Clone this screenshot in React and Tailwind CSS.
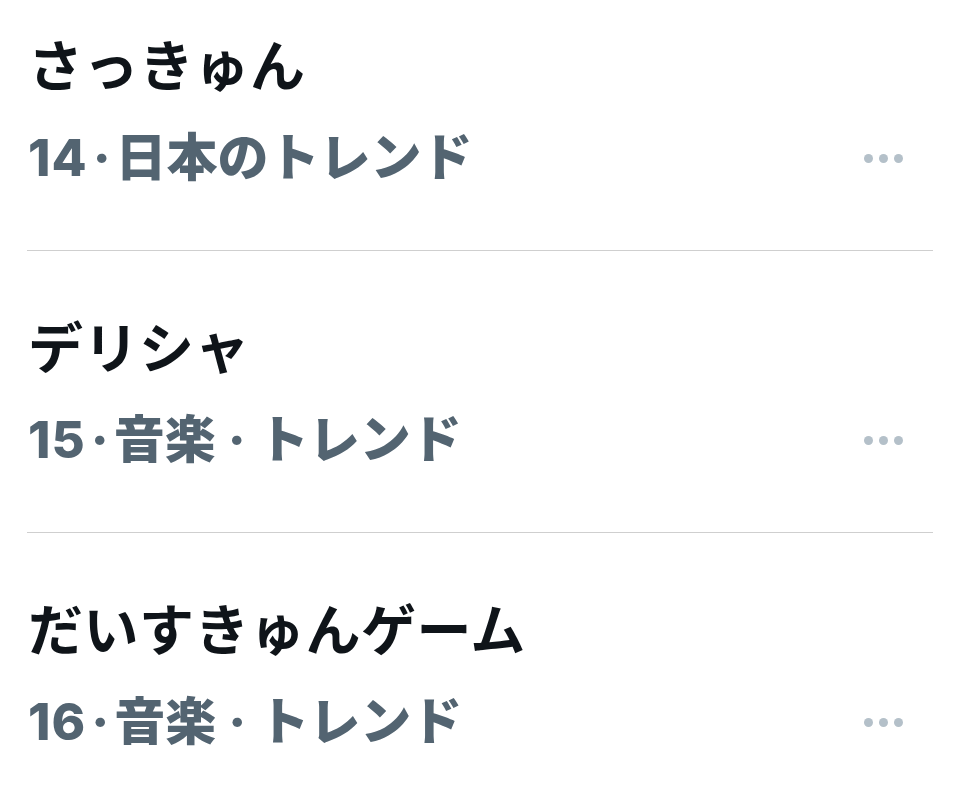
import React from 'react';

const trends = [
  { title: 'さっきゅん', rank: 14, meta: ['日本のトレンド'] },
  { title: 'デリシャ', rank: 15, meta: ['音楽', 'トレンド'] },
  { title: 'だいすきゅんゲーム', rank: 16, meta: ['音楽', 'トレンド'] },
];

const font = { fontFamily: '"Inter", "Noto Sans CJK JP", sans-serif' };

const MoreDots = () => (
  <div className="flex items-center gap-[6px] mr-[27px]">
    <span className="w-[9px] h-[9px] rounded-full bg-[#b4c0c9]" />
    <span className="w-[9px] h-[9px] rounded-full bg-[#b4c0c9]" />
    <span className="w-[9px] h-[9px] rounded-full bg-[#b4c0c9]" />
  </div>
);

const TrendRow = ({ item, first }) => (
  <div className={first ? 'pt-[34px] pb-[62px] pl-[28px] pr-[30px]' : 'pt-[65px] pb-[62px] pl-[28px] pr-[30px]'}>
    <div className="text-[55px] leading-[64px] font-bold text-[#0f1419] tracking-[0.5px]">
      {item.title}
    </div>
    <div className="mt-[30px] flex items-center justify-between">
      <div className="flex items-center text-[51px] leading-[60px] font-extrabold text-[#536471]">
        <span className="tracking-[1px]">{item.rank}</span>
        <span className="mx-[5px]">·</span>
        {item.meta.map((m, i) => (
          <React.Fragment key={i}>
            {i > 0 && <span className="mx-[12px]">·</span>}
            <span>{m}</span>
          </React.Fragment>
        ))}
      </div>
      <MoreDots />
    </div>
  </div>
);

export default function App() {
  return (
    <div className="w-[960px] h-[810px] bg-white overflow-hidden" style={font}>
      {trends.map((t, i) => (
        <div key={i}>
          {i > 0 && <div className="mx-[27px] h-[1px] bg-[#cfcfcf]" />}
          <TrendRow item={t} first={i === 0} />
        </div>
      ))}
    </div>
  );
}
